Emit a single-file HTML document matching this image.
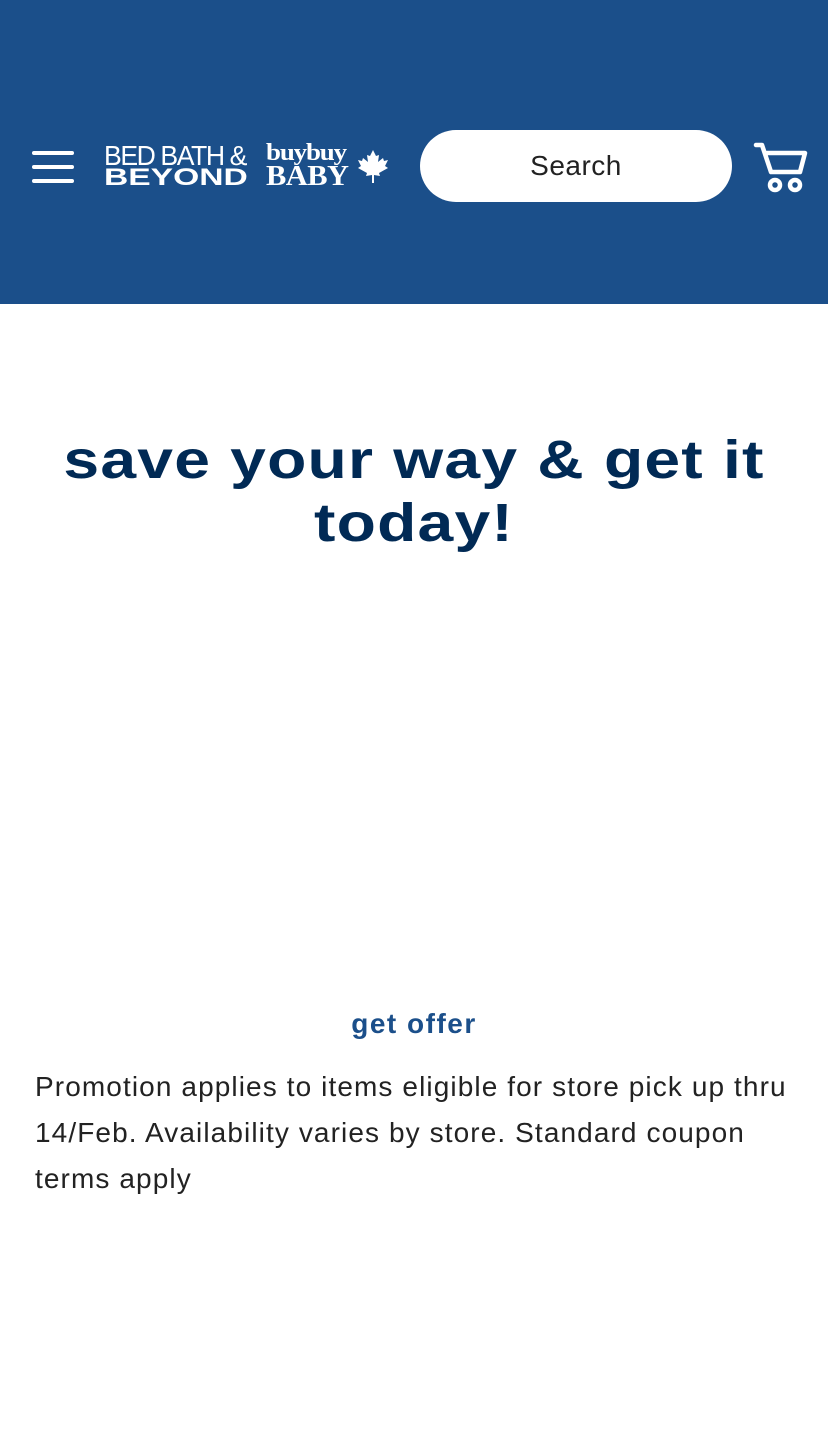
<!DOCTYPE html>
<html><head><meta charset="utf-8"><style>
html,body{margin:0;padding:0;width:828px;height:1430px;background:#fff;overflow:hidden}
body{font-family:"Liberation Sans",sans-serif}
.hdr{position:absolute;left:0;top:0;width:828px;height:304px;background:#1b4f8a}
.burger span{position:absolute;left:32px;width:42px;height:4px;border-radius:2px;background:#fff}
.search{position:absolute;left:420px;top:130px;width:312px;height:72px;border-radius:36px;background:#fff;color:#222;font-size:28px;line-height:72px;text-align:center;letter-spacing:0.5px}
.lg{position:absolute;color:#fff;white-space:nowrap}
h1{position:absolute;left:0;top:429px;width:828px;margin:0;text-align:center;color:#012a55;font-size:54px;line-height:63px;font-weight:900;letter-spacing:1px;transform:scaleX(1.19);transform-origin:center}
.offer{position:absolute;left:0;top:1008px;width:828px;text-align:center;color:#1b4f8a;font-weight:bold;font-size:28px;letter-spacing:1.5px}
.promo{position:absolute;left:35px;top:1064px;width:790px;font-size:28px;line-height:46px;color:#222;letter-spacing:1.1px;white-space:nowrap}
</style></head><body>
<div class="hdr">
<div class="burger"><span style="top:151px"></span><span style="top:165px"></span><span style="top:179px"></span></div>
<div class="lg" style="left:104px;top:142px;font-size:28px;line-height:28px;letter-spacing:-1.5px;transform:scaleX(0.95);transform-origin:left">BED BATH &amp;</div>
<div class="lg" style="left:104px;top:166px;font-size:24px;line-height:24px;font-weight:900;transform:scaleX(1.4);transform-origin:left">BEYOND</div>
<div class="lg" style="left:266px;top:141px;font-size:24px;line-height:24px;font-weight:900;font-family:'Liberation Serif',serif;letter-spacing:-1px;transform:scaleX(1.12);transform-origin:left">buybuy</div>
<div class="lg" style="left:266px;top:162px;font-size:29px;line-height:29px;font-weight:900;font-family:'Liberation Serif',serif;letter-spacing:-0.5px;transform:scaleX(1.05);transform-origin:left">BABY</div>
<svg style="position:absolute;left:357px;top:150px" width="32" height="34" viewBox="0 0 32 34"><path d="M16 0 L19 6 L22 5 L21 12 L26 8 L27 11 L31 10 L28 16 L31 18 L22 23 L23 26 L17 25 L17 33 L15 33 L15 25 L9 26 L10 23 L1 18 L4 16 L1 10 L5 11 L6 8 L11 12 L10 5 L13 6 Z" fill="#fff"/></svg>
<div class="search">Search</div>
<svg style="position:absolute;left:752px;top:140px" width="58" height="56" viewBox="0 0 58 56"><path d="M4 5 H10 L19 32 H48 L53 13 H15" fill="none" stroke="#fff" stroke-width="4.5" stroke-linejoin="round" stroke-linecap="round"/><circle cx="23" cy="45" r="5" fill="none" stroke="#fff" stroke-width="4.5"/><circle cx="43" cy="45" r="5" fill="none" stroke="#fff" stroke-width="4.5"/></svg>
</div>
<h1>save your way &amp; get it<br>today!</h1>
<div class="offer">get offer</div>
<div class="promo">Promotion applies to items eligible for store pick up thru<br>14/Feb. Availability varies by store. Standard coupon<br>terms apply</div>
</body></html>
